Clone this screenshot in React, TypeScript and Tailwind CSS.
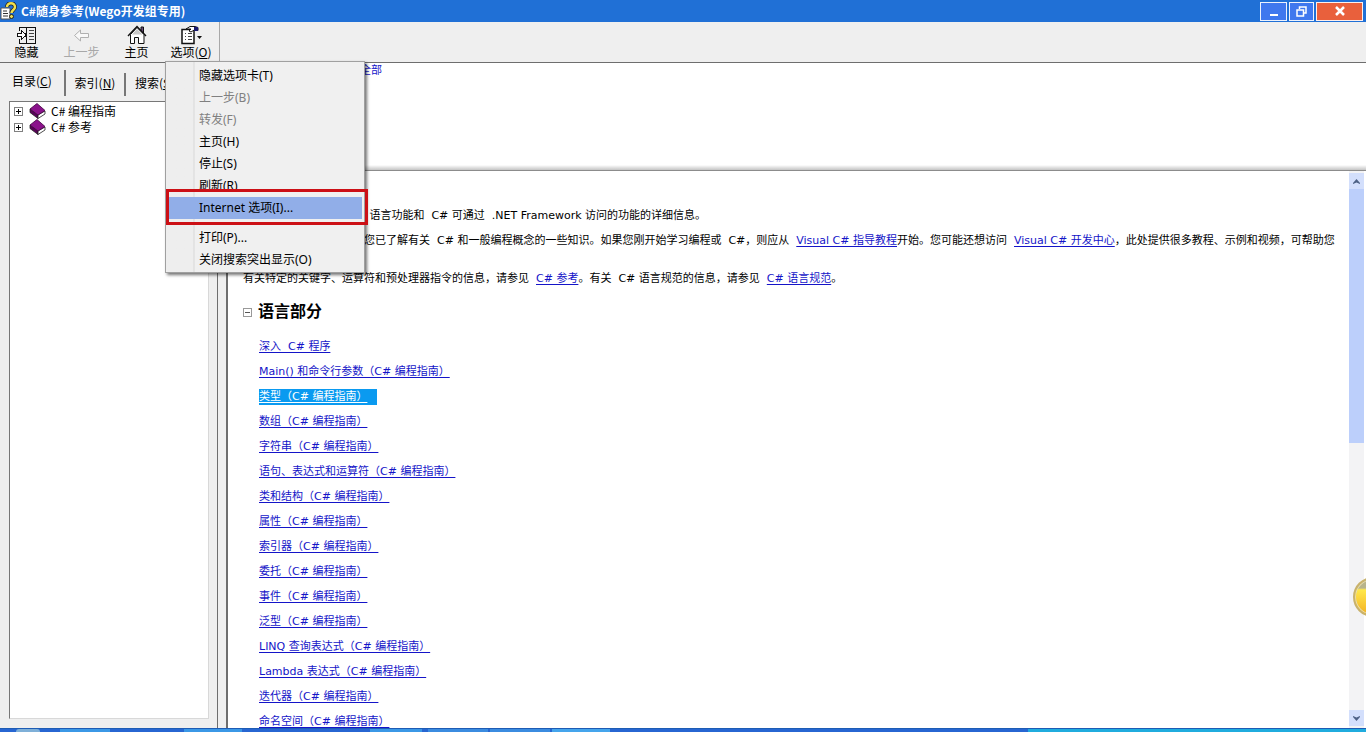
import type { ReactNode } from "react";

const tools = [
  { label: "隐藏", icon: <HideIcon />, disabled: false },
  { label: "上一步", icon: <BackIcon />, disabled: true },
  { label: "主页", icon: <HomeIcon />, disabled: false },
];

const menuTop = [
  { label: "隐藏选项卡(T)" },
  { label: "上一步(B)", disabled: true },
  { label: "转发(F)", disabled: true },
  { label: "主页(H)" },
  { label: "停止(S)" },
  { label: "刷新(R)" },
];

const menuBottom = ["打印(P)...", "关闭搜索突出显示(O)"];

const topics = [
  "深入\u00a0 C# 程序",
  "Main() 和命令行参数（C# 编程指南）",
  "类型（C# 编程指南）",
  "数组（C# 编程指南）",
  "字符串（C# 编程指南）",
  "语句、表达式和运算符（C# 编程指南）",
  "类和结构（C# 编程指南）",
  "属性（C# 编程指南）",
  "索引器（C# 编程指南）",
  "委托（C# 编程指南）",
  "事件（C# 编程指南）",
  "泛型（C# 编程指南）",
  "LINQ 查询表达式（C# 编程指南）",
  "Lambda 表达式（C# 编程指南）",
  "迭代器（C# 编程指南）",
  "命名空间（C# 编程指南）",
];

function HideIcon() {
  return (
    <svg width="20" height="20" viewBox="0 0 20 20" fill="none" stroke="#111" shapeRendering="crispEdges">
      <path d="M2.500 6V2.500h16v16h-16V14M9.500 2.500v16" />
      <path d="M12 5.500h5M12 8.500h5M12 11.500h5M12 14.500h5" stroke="#444" />
      <path d="M0.500 8.500h4v-3l5 4.500-5 4.500v-3h-4z" fill="#fff" />
    </svg>
  );
}

function BackIcon() {
  return (
    <svg width="20" height="20" viewBox="0 0 20 20" fill="#f8f8f8" stroke="#b0b0b0">
      <path d="M2.500 10.500l6-5.500v3.500h8v4h-8V16z" />
    </svg>
  );
}

function HomeIcon() {
  return (
    <svg width="20" height="20" viewBox="0 0 20 20" fill="#fff" stroke="#111">
      <path d="M14 5.500V2h2.500v6" fill="#6a4a78" />
      <path d="M3.500 9.500v9h4v-6h4v6h5.500v-9L10 2.500z" />
      <path d="M5 9.500L10 4l5.500 5.500z" fill="#c8c8c8" stroke="none" />
      <path d="M1 11L10 1.500l9 9.500" fill="none" strokeWidth="1.400" />
    </svg>
  );
}

function OptionsIcon() {
  return (
    <svg width="22" height="20" viewBox="0 0 22 20" fill="none" stroke="#111">
      <path d="M2 4.500h12v14H2z" fill="#fff" strokeWidth="1.500" />
      <path d="M5 8.500h1M8 8.500h4M5 11.500h1M8 11.500h4M5 14.500h1M8 14.500h4" stroke="#444" />
      <path d="M6 4l4-2.500h5l3 1v3l-3-1-4 2.500-2-1 2-2z" fill="#fff" />
      <path d="M14 2h4v4h-4z" fill="#181870" stroke="none" />
      <path d="M17 11h5l-2.500 3z" fill="#111" stroke="none" />
    </svg>
  );
}

function AppIcon() {
  return (
    <svg width="17" height="18" viewBox="0 0 17 18">
      <path d="M1 6h9v11H1z" fill="#fff" stroke="#555" />
      <path d="M3 9h4M3 11.500h5M3 14h5" stroke="#333" />
      <path d="M7 5c0-5 8-5 8 0 0 3-3.500 3-3.500 6" fill="none" stroke="#222" strokeWidth="4" />
      <path d="M7 5c0-5 8-5 8 0 0 3-3.500 3-3.500 6" fill="none" stroke="#f0e050" strokeWidth="2.500" />
      <circle cx="11.500" cy="14.500" r="2" fill="#f0e050" stroke="#222" />
    </svg>
  );
}

function BookIcon() {
  return (
    <svg width="18" height="16" viewBox="0 0 18 16">
      <path d="M1 6l8 6v3.500L1 9.500z" fill="#5a005a" stroke="#222" strokeWidth="0.800" />
      <path d="M9 12l7-4v3l-7 4.500z" fill="#fff" stroke="#222" strokeWidth="0.800" />
      <path d="M1 6l7-5.500 8 7L9 12z" fill="#8b128b" stroke="#40003f" strokeWidth="0.800" />
    </svg>
  );
}

function Tick({ up = false }: { up?: boolean }) {
  return (
    <svg width="7" height="5" viewBox="0 0 7 5" fill="#4d6185">
      {up ? <path d="M0 4l3.500-4L7 4v1L3.500 3.500 0 5z" /> : <path d="M0 1l3.500 4L7 1V0L3.500 1.500 0 0z" />}
    </svg>
  );
}

function TitleBar() {
  return (
    <header className="flex h-[22px] shrink-0 items-center bg-[#2070d6] pr-[3px]">
      <AppIcon />
      <h1 className="ml-1 flex-1 text-xs leading-4 font-bold text-white">C#随身参考(Wego开发组专用)</h1>
      <div className="flex h-[19px] gap-[2px]">
        <button aria-label="最小化" className="flex w-[27px] items-end justify-center border border-white/90 bg-[#3f78ee] pb-[4px]">
          <span className="h-[2px] w-2 bg-white" />
        </button>
        <button aria-label="还原" className="flex w-[25px] items-center justify-center border border-white/90 bg-[#3f78ee]">
          <svg width="11" height="11" viewBox="0 0 11 11" fill="none" stroke="#fff" strokeWidth="1.500">
            <path d="M3.500 3V1h6.500v6H8M1 4h6.500v6H1z" />
          </svg>
        </button>
        <button aria-label="关闭" className="flex w-[47px] items-center justify-center border border-white/90 bg-[#e9603c]">
          <svg width="10" height="10" viewBox="0 0 10 10" stroke="#fff" strokeWidth="2.500">
            <path d="M1 1l8 8M9 1L1 9" />
          </svg>
        </button>
      </div>
    </header>
  );
}

function OptionsMenu() {
  const row = "block h-[22px] w-full pl-[33px] text-left";
  return (
    <div className="absolute top-[39px] left-0 z-10 w-[200px] border border-[#a0a0a0] bg-[#f0f0f0] bg-linear-to-r from-[#eeeeee] from-[27px] via-[#d8d8d8] via-[28px] to-[#f0f0f0] to-[29px] pt-[3px] pb-px font-['Noto_Sans','Noto_Sans_CJK_SC',sans-serif] text-xs leading-[22px] text-black shadow-[2px_2px_3px_rgba(0,0,0,0.55)]">
      {menuTop.map((item) => (
        <button key={item.label} disabled={item.disabled} className={`${row} disabled:text-[#808080]`}>
          {item.label}
        </button>
      ))}
      <div className="relative pr-[2px]">
        <button className={`${row} bg-[#91aee8]`}>Internet 选项(I)...</button>
        {/* highlight frame around the current item */}
        <div className="pointer-events-none absolute -top-2 -right-1 -bottom-1.5 left-0 border-3 border-[#cc1016]" />
      </div>
      <hr className="mt-1 mb-[3px] border-[#d8d8d8]" />
      {menuBottom.map((label) => (
        <button key={label} className={row}>
          {label}
        </button>
      ))}
    </div>
  );
}

function Toolbar() {
  return (
    <nav className="flex h-10 shrink-0 bg-[#efefef] text-xs leading-[14px]">
      {tools.map((tool) => (
        <button
          key={tool.label}
          disabled={tool.disabled}
          className="flex w-[55px] flex-col items-center pt-[3px] pr-[2px] disabled:text-[#a8a8a8]"
        >
          {tool.icon}
          {tool.label}
        </button>
      ))}
      <div className="relative w-[55px] border-r border-[#a8a8a8]">
        <button className="flex w-full flex-col items-center pt-[3px] pr-[2px]">
          <OptionsIcon />
          <span>
            选项(<u>O</u>)
          </span>
        </button>
        <OptionsMenu />
      </div>
    </nav>
  );
}

function Sidebar() {
  return (
    <aside className="flex w-[218px] shrink-0 flex-col border-t border-r border-[#6e6e6e] bg-[#efefef] pr-2 pb-[9px] pl-[9px] text-xs">
      <div className="flex h-[38px] items-start pt-[7px] leading-4 whitespace-nowrap">
        <button className="h-[26px] w-[57px] border-r-2 border-[#777] pb-1 pl-[3px] text-left">
          目录(<u>C</u>)
        </button>
        <button className="mt-[3px] h-[23px] w-[60px] border-r-2 border-[#777] pb-1 text-center">
          索引(<u>N</u>)
        </button>
        <button className="mt-[3px] h-[23px] pb-1 pl-[9px]">
          搜索(<u>S</u>)
        </button>
      </div>
      <ul className="flex-1 border border-t-[#777] border-r-[#d8d8d8] border-b-[#d8d8d8] border-l-[#777] bg-white pt-px pl-1">
        {["C# 编程指南", "C# 参考"].map((label) => (
          <li key={label} className="flex h-4 items-center leading-4">
            <button aria-label="展开" className="flex size-[9px] items-center justify-center border border-[#808080]">
              <svg width="5" height="5" stroke="#000" shapeRendering="crispEdges">
                <path d="M0 2.500h5M2.500 0v5" />
              </svg>
            </button>
            <span className="mr-1 ml-[6px]">
              <BookIcon />
            </span>
            {label}
          </li>
        ))}
      </ul>
    </aside>
  );
}

function DocLink({ children, selected = false }: { children: ReactNode; selected?: boolean }) {
  return (
    <a
      href="#"
      className={`underline underline-offset-2 ${selected ? "inline-block bg-[#0a9af0] pr-[10px] leading-4 text-white" : "text-[#1414c8]"}`}
    >
      {children}
    </a>
  );
}

function Scrollbar() {
  return (
    <div className="mr-[2px] flex w-[15px] shrink-0 flex-col bg-[#f3f3f5] pt-[2px] pb-[2px]">
      <button aria-label="向上" className="flex h-4 items-center justify-center bg-[#d3dffc]">
        <Tick up />
      </button>
      <div className="h-[46%] bg-[#bccffb]" />
      <button aria-label="向下" className="mt-auto flex h-4 items-center justify-center bg-[#d3dffc]">
        <Tick />
      </button>
    </div>
  );
}

function Article() {
  return (
    <main className="flex min-w-0 flex-1 flex-col border-t border-l-2 border-[#6e6e6e] bg-white font-['DejaVu_Sans','Noto_Sans_CJK_SC',sans-serif] text-[11px]">
      <div className="h-[108px] shrink-0 border-b border-[#8c8c8c] bg-linear-to-b from-white from-[102px] to-[#c4c4c4]">
        <div className="flex gap-10 pl-[15px] leading-4">
          <DocLink>全部折叠</DocLink>
          <span className="text-[#1414c8]">代码：全部</span>
        </div>
      </div>
      <div className="flex min-h-0 flex-1">
        <div className="min-w-0 flex-1 overflow-hidden pt-[35px] pr-2 pl-[15px] leading-[19px]">
          <p>本节提供有关关键的&nbsp; C# 语言功能和&nbsp; C# 可通过&nbsp; .NET Framework 访问的功能的详细信息。</p>
          <p className="mt-[6px]">
            本节中的大部分内容假定您已了解有关&nbsp; C# 和一般编程概念的一些知识。如果您刚开始学习编程或&nbsp; C#，则应从&nbsp;{" "}
            <DocLink>Visual C# 指导教程</DocLink>开始。您可能还想访问&nbsp; <DocLink>Visual C# 开发中心</DocLink>
            ，此处提供很多教程、示例和视频，可帮助您
            <br />
            快速入门。
          </p>
          <p>
            有关特定的关键字、运算符和预处理器指令的信息，请参见&nbsp; <DocLink>C# 参考</DocLink>。有关&nbsp; C#
            语言规范的信息，请参见&nbsp; <DocLink>C# 语言规范</DocLink>。
          </p>
          <h2 className="mt-3 flex items-center gap-[6px] text-base leading-6 font-bold">
            <button aria-label="折叠" className="flex size-[9px] items-center justify-center border border-[#999]">
              <span className="h-px w-[5px] bg-[#555]" />
            </button>
            语言部分
          </h2>
          <ul className="mt-[10px] pl-4 leading-[25px]">
            {topics.map((topic, i) => (
              <li key={topic} className="h-[25px]">
                <DocLink selected={i === 2}>{topic}</DocLink>
              </li>
            ))}
          </ul>
        </div>
        <Scrollbar />
      </div>
    </main>
  );
}

function Taskbar() {
  return (
    <footer className="flex h-1 shrink-0 gap-[2px] border-t border-[#1e5cb4] bg-[#2766d2]">
      <div className="ml-4 w-6 rounded-t-full bg-[#7fb0d8]" />
      <div className="ml-[18px] w-[50px] bg-[#3b98e6]" />
      <div className="ml-[72px] w-[58px] bg-[#3b98e6]" />
      <div className="ml-[126px] w-[52px] bg-[#3b98e6]" />
      <div className="ml-1 w-[60px] bg-[#3b8ce0]" />
      <div className="w-[60px] bg-[#3b8ce0]" />
      <div className="w-[58px] bg-[#45a5ec]" />
      <div className="ml-auto w-[338px] bg-[#20acde]" />
    </footer>
  );
}

export default function App() {
  return (
    <div className="relative flex h-screen flex-col overflow-hidden bg-[#efefef] font-['Noto_Sans_CJK_SC',sans-serif] text-black">
      <TitleBar />
      <Toolbar />
      <div className="flex min-h-0 flex-1 gap-2">
        <Sidebar />
        <Article />
      </div>
      <Taskbar />
      {/* floating gold ball docked at the screen edge */}
      <button
        aria-label="悬浮球"
        className="absolute -right-[27px] bottom-[115px] size-10 rounded-full border-2 border-[#c9b26c] bg-linear-to-b from-[#b8b48c] from-25% via-[#ffe84a] via-30% to-[#f2b020] ring-1 ring-[#e8dcae] ring-inset"
      />
    </div>
  );
}
